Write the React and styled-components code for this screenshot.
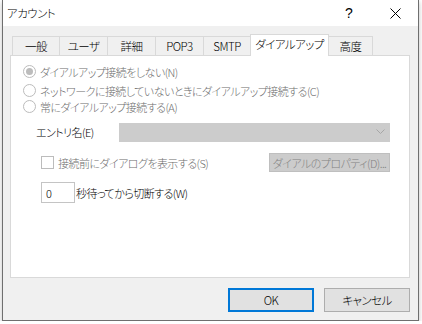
import React from "react";
import styled, { createGlobalStyle } from "styled-components";

const Global = createGlobalStyle`
  html, body { margin: 0; padding: 0; background: #ffffff; }
  body {
    font-family: "Noto Sans CJK JP", "Noto Sans", sans-serif;
    font-size: 11px;
    letter-spacing: -0.55px;
    font-feature-settings: "palt";
    font-weight: 300;
    color: #000;
  }
`;

const Window = styled.div`
  margin-left: 2px;
  width: 417px;
  height: 321px;
  box-sizing: border-box;
  border: 1px solid #6f6f6f;
  border-top: none;
  background: #f0f0f0;
  box-shadow: 0 2px 5px rgba(0, 0, 0, 0.25);
  display: flex;
  flex-direction: column;
`;

const TitleBar = styled.div`
  height: 26px;
  background: #fff;
  display: flex;
  align-items: center;
  padding-left: 4px;
`;

const Title = styled.div`
  flex: 1;
  line-height: 16px;
  font-size: 11.5px;
`;

const TitleButton = styled.div`
  width: ${(p) => p.$w}px;
  display: flex;
  justify-content: center;
  align-items: center;
  font-family: "Liberation Sans", sans-serif;
  letter-spacing: 0;
  font-size: 14px;
  height: 26px;
`;

const Body = styled.div`
  flex: 1;
  display: flex;
  flex-direction: column;
  padding: 8px 8px 8px 7px;
`;

const TabStrip = styled.div`
  display: flex;
  align-items: flex-end;
  height: 21px;
  padding-left: 2px;
  position: relative;
  z-index: 1;
`;

const Tab = styled.div`
  box-sizing: border-box;
  width: ${(p) => p.$w}px;
  height: ${(p) => (p.$active ? 22 : 19)}px;
  margin-bottom: ${(p) => (p.$active ? -1 : 0)}px;
  margin-left: ${(p) => (p.$first ? 0 : -1)}px;
  border: 1px solid #d9d9d9;
  border-bottom: none;
  background: ${(p) => (p.$active ? "#fff" : "#f0f0f0")};
  display: flex;
  align-items: center;
  justify-content: center;
  padding-bottom: ${(p) => (p.$active ? 3 : 0)}px;
  line-height: 14px;
  font-size: 11.5px;
  position: relative;
  z-index: ${(p) => (p.$active ? 2 : 1)};
  white-space: nowrap;
`;

const Panel = styled.div`
  box-sizing: border-box;
  height: 223px;
  background: #fff;
  border: 1px solid #d9d9d9;
  padding: 9px 0 0 12px;
  display: flex;
  flex-direction: column;
`;

const RadioRow = styled.div`
  display: flex;
  align-items: center;
  height: ${(p) => p.$h}px;
  margin-top: ${(p) => p.$mt || 0}px;
  color: #6d6d6d;
  white-space: nowrap;
`;

const RadioCircle = styled.span`
  box-sizing: border-box;
  width: 13px;
  height: 13px;
  border-radius: 50%;
  border: 1px solid #bcbcbc;
  background: #fff;
  margin-right: 4px;
  display: flex;
  align-items: center;
  justify-content: center;
  &::after {
    content: "";
    width: 7px;
    height: 7px;
    border-radius: 50%;
    background: ${(p) => (p.$checked ? "#bcbcbc" : "transparent")};
  }
`;

const EntryRow = styled.div`
  display: flex;
  align-items: center;
  margin-top: 8px;
  padding-left: 13px;
  height: 20px;
`;

const Label = styled.span`
  width: 83px;
  white-space: nowrap;
`;

const Combo = styled.div`
  box-sizing: border-box;
  width: 271px;
  height: 19px;
  background: #cccccc;
  border: 1px solid #cccccc;
  display: flex;
  align-items: center;
  justify-content: flex-end;
  padding-right: 4px;
`;

const CheckRow = styled.div`
  display: flex;
  align-items: center;
  margin-top: 11px;
  padding-left: 18px;
  height: 19px;
  color: #6d6d6d;
  white-space: nowrap;
`;

const CheckBox = styled.span`
  box-sizing: border-box;
  width: 13px;
  height: 13px;
  border: 1px solid #bcbcbc;
  background: #fff;
  margin-right: 4px;
`;

const Spacer = styled.div`
  flex: 1;
`;

const DisabledButton = styled.div`
  box-sizing: border-box;
  width: 121px;
  height: 19px;
  background: #cccccc;
  border: 1px solid #bfbfbf;
  color: #838383;
  display: flex;
  align-items: center;
  justify-content: center;
  margin-right: 19px;
`;

const WaitRow = styled.div`
  display: flex;
  align-items: center;
  margin-top: 10px;
  padding-left: 18px;
  height: 21px;
  white-space: nowrap;
`;

const TextBox = styled.div`
  box-sizing: border-box;
  width: 34px;
  height: 21px;
  border: 1px solid #c4c4c4;
  background: #fff;
  padding-left: 4px;
  display: flex;
  align-items: center;
  margin-right: 1px;
`;

const Footer = styled.div`
  display: flex;
  justify-content: flex-end;
  gap: 10px;
  margin-top: 10px;
`;

const Button = styled.div`
  box-sizing: border-box;
  width: 86px;
  height: 24px;
  background: #e1e1e1;
  border: ${(p) => (p.$default ? "2px solid #0078d7" : "1px solid #adadad")};
  display: flex;
  align-items: center;
  justify-content: center;
  font-size: 11.5px;
`;

const Chevron = () => (
  <svg width="9" height="6" viewBox="0 0 9 6">
    <path d="M0.5 0.5 L4.5 4.5 L8.5 0.5" fill="none" stroke="#a6a6a6" strokeWidth="1" />
  </svg>
);

const CloseIcon = () => (
  <svg width="11" height="11" viewBox="0 0 11 11">
    <path d="M0.5 0.5 L10.5 10.5 M10.5 0.5 L0.5 10.5" stroke="#000" strokeWidth="1" />
  </svg>
);

const tabs = [
  ["一般", 48],
  ["ユーザ", 49],
  ["詳細", 49],
  ["POP3", 49],
  ["SMTP", 48],
  ["ダイアルアップ", 79],
  ["高度", 45],
];

export default function App() {
  return (
    <>
      <Global />
      <Window>
        <TitleBar>
          <Title>アカウント</Title>
          <TitleButton $w={46}>?</TitleButton>
          <TitleButton $w={46}>
            <CloseIcon />
          </TitleButton>
        </TitleBar>
        <Body>
          <TabStrip>
            {tabs.map(([t, w], i) => (
              <Tab key={t} $w={w} $first={i === 0} $active={i === 5}>
                {t}
              </Tab>
            ))}
          </TabStrip>
          <Panel>
            <RadioRow $h={13}>
              <RadioCircle $checked />
              ダイアルアップ接続をしない(N)
            </RadioRow>
            <RadioRow $h={17} $mt={4}>
              <RadioCircle />
              ネットワークに接続していないときにダイアルアップ接続する(C)
            </RadioRow>
            <RadioRow $h={15}>
              <RadioCircle />
              常にダイアルアップ接続する(A)
            </RadioRow>
            <EntryRow>
              <Label>エントリ名(E)</Label>
              <Combo>
                <Chevron />
              </Combo>
            </EntryRow>
            <CheckRow>
              <CheckBox />
              接続前にダイアログを表示する(S)
              <Spacer />
              <DisabledButton>ダイアルのプロパティ(D)...</DisabledButton>
            </CheckRow>
            <WaitRow>
              <TextBox>0</TextBox>
              秒待ってから切断する(W)
            </WaitRow>
          </Panel>
          <Footer>
            <Button $default>OK</Button>
            <Button>キャンセル</Button>
          </Footer>
        </Body>
      </Window>
    </>
  );
}
